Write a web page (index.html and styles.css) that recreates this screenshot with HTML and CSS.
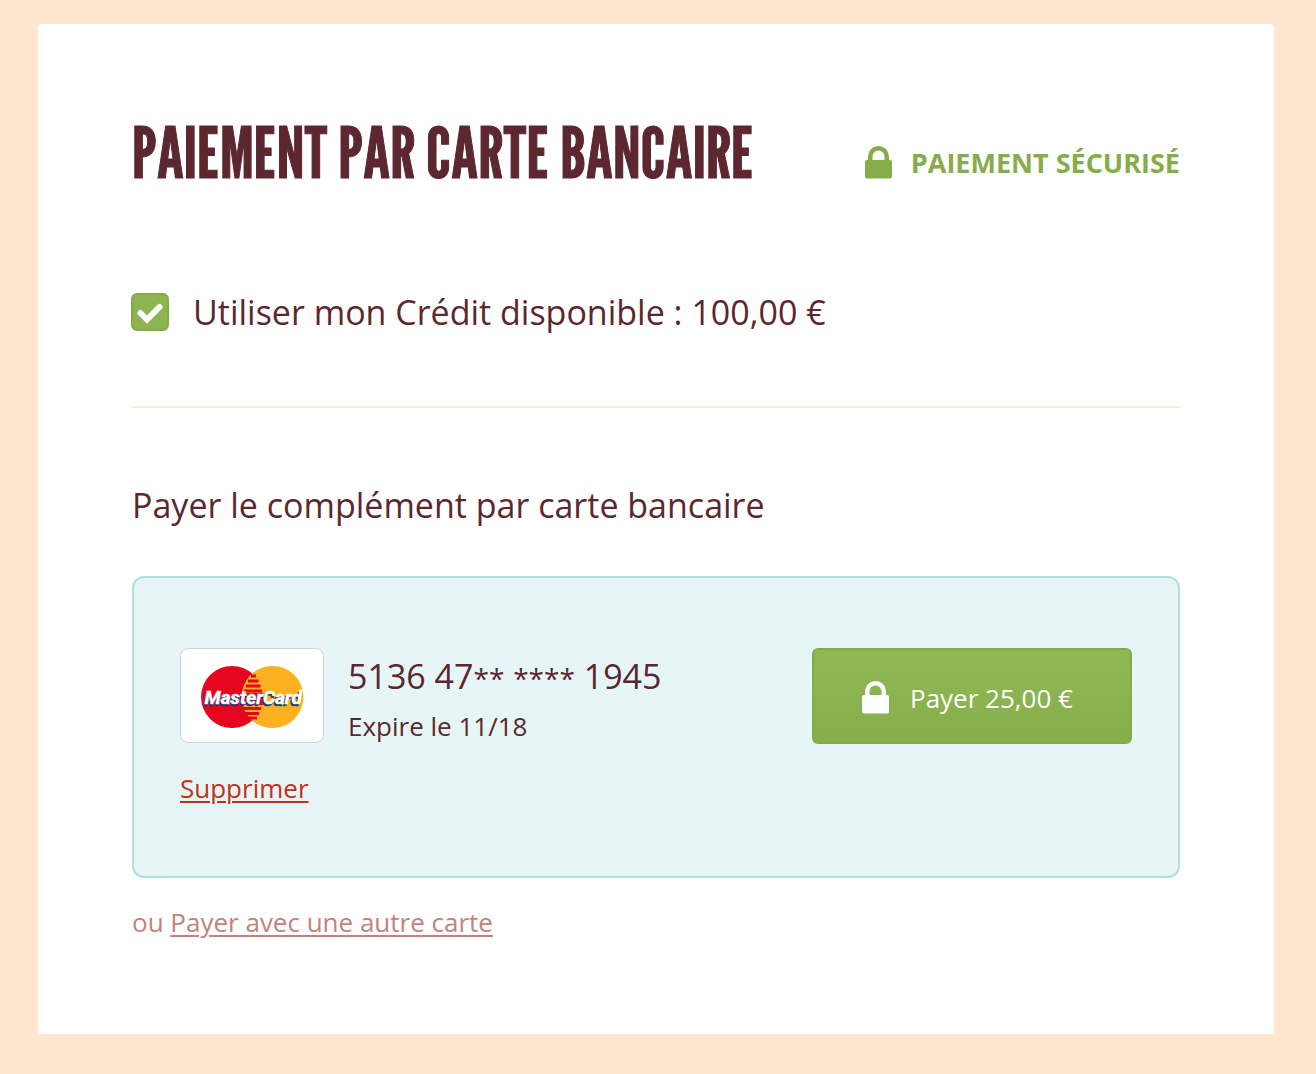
FILE: index.html
```
<!DOCTYPE html>
<html lang="fr">
<head>
<meta charset="utf-8">
<title>Paiement par carte bancaire</title>
<link rel="stylesheet" href="styles.css">
</head>
<body>
<form class="payment" action="" method="post">
  <div class="header">
    <h1>PAIEMENT PAR CARTE BANCAIRE</h1>
    <p class="secure">
      <svg class="lock" viewBox="0 0 28 34" aria-hidden="true">
        <path fill-rule="evenodd" d="M3 14V10.500a10.500 10.500 0 0 1 21 0v3.500h1a2 2 0 0 1 2 2V30.500a2 2 0 0 1-2 2H2a2 2 0 0 1-2-2V16a2 2 0 0 1 2-2ZM7.500 14H19.500V10.500a6 6 0 0 0-12 0Z"/>
      </svg>
      PAIEMENT SÉCURISÉ
    </p>
  </div>

  <div class="credit">
    <input type="checkbox" id="credit" name="credit" checked>
    <label for="credit">Utiliser mon Crédit disponible : 100,00 €</label>
    <svg class="tick" viewBox="0 0 38 38" aria-hidden="true">
      <path d="M9.500 20l6.500 6.500L28.500 14"/>
    </svg>
  </div>

  <h2>Payer le complément par carte bancaire</h2>

  <div class="card">
    <div class="card-row">
      <svg class="logo" viewBox="0 0 144 95" role="img" aria-label="MasterCard">
        <rect x="0.500" y="0.500" width="143" height="94" rx="7.500" fill="#fff" stroke="#cfd4d4"/>
        <circle cx="52" cy="49" r="31" fill="#e6041f"/>
        <circle cx="92.500" cy="49" r="31" fill="#fcb120"/>
        <path d="M71 28h5M68 33h10.500M66 38h14.500M64 43h18M63 60.500h18M65 65.500h14M68 70h9" stroke="#e6041f" stroke-width="3"/>
        <path d="M61.500 45h22v12h-22z" fill="#e6041f"/>
        <g class="logo-text">
          <text x="23" y="57.500" fill="#213a70" stroke="#213a70">MasterCard</text>
          <text x="24.500" y="56" fill="#fff" stroke="#fff">MasterCard</text>
        </g>
      </svg>
      <div class="details">
        <p class="number">5136 47<span class="mask">**</span> <span class="mask">****</span> 1945</p>
        <p class="expiry">Expire le 11/18</p>
      </div>
      <button type="submit" class="pay">
        <svg class="lock" viewBox="0 0 28 34" aria-hidden="true">
          <path fill-rule="evenodd" d="M3 14V10.500a10.500 10.500 0 0 1 21 0v3.500h1a2 2 0 0 1 2 2V30.500a2 2 0 0 1-2 2H2a2 2 0 0 1-2-2V16a2 2 0 0 1 2-2ZM7.500 14H19.500V10.500a6 6 0 0 0-12 0Z"/>
        </svg>
        Payer 25,00 €
      </button>
    </div>
    <a class="remove" href="#">Supprimer</a>
  </div>

  <p class="other">ou <a href="#">Payer avec une autre carte</a></p>
</form>
</body>
</html>
```
FILE: styles.css
```
* { box-sizing: border-box; }
body {
  margin: 24px 42px 40px 38px;
  background: #ffe6d0;
  color: #5c272e;
  font-family: "Segoe UI", "Open Sans", "Noto Sans", sans-serif;
  font-size: 26px;
  line-height: 40px;
}
h1, h2, p { margin: 0; }
.payment {
  padding: 92px 94px;
  background: #fff;
  border-radius: 4px;
  box-shadow: 0 0 2px #fddcc3;
}
.header {
  display: flex;
  justify-content: space-between;
  align-items: center;
}
h1 {
  font-family: "League Gothic", "Liberation Sans Narrow", "Liberation Sans", sans-serif;
  font-size: 70px;
  font-weight: normal;
  line-height: 72px;
  white-space: nowrap;
  -webkit-text-stroke: 1px;
}
.secure {
  display: flex;
  align-items: center;
  gap: 18px;
  padding-top: 22px;
  color: #86ad4a;
  font-size: 27px;
  font-weight: bold;
  white-space: nowrap;
}
.lock {
  flex: none;
  width: 28px;
  height: 34px;
  fill: currentColor;
}
.credit {
  position: relative;
  display: flex;
  align-items: center;
  gap: 24px;
  margin-top: 100px;
  padding-bottom: 70px;
  border-bottom: 2px solid #f8ebd7;
  font-size: 34px;
  line-height: 48px;
}
.credit input {
  appearance: none;
  flex: none;
  width: 38px;
  height: 38px;
  margin: 0 0 0 -1px;
  border: 2px solid #83ac48;
  border-radius: 6px;
  background: #8cb551;
}
.tick {
  position: absolute;
  top: 5px;
  left: -1px;
  width: 38px;
  height: 38px;
  fill: none;
  stroke: #fff;
  stroke-width: 6;
  stroke-linecap: round;
  pointer-events: none;
  visibility: hidden;
}
.credit input:checked ~ .tick { visibility: visible; }
h2 {
  margin: 72px 0 46px;
  font-size: 34px;
  font-weight: normal;
  line-height: 50px;
}
.card {
  padding: 70px 46px 68px;
  border: 2px solid #aee0df;
  border-radius: 12px;
  background: #e6f6f6;
}
.card-row {
  display: flex;
  align-items: flex-start;
  margin-bottom: 20px;
}
.logo {
  flex: none;
  width: 144px;
  height: 95px;
}
.logo-text {
  font: italic bold 19px Roboto, "Open Sans", sans-serif;
  stroke-width: 0.5;
}
.details {
  flex: 1;
  margin-left: 24px;
}
.number {
  font-size: 34px;
  line-height: 56px;
}
.mask {
  font-size: 28px;
  line-height: 28px;
}
.expiry { line-height: 44px; }
.pay {
  display: flex;
  align-items: center;
  gap: 20px;
  width: 320px;
  height: 96px;
  padding: 4px 48px 0;
  border: 2px solid #83ac48;
  border-radius: 6px;
  background: linear-gradient(#90b857, #86af49);
  color: #fff;
  font: inherit;
  cursor: pointer;
}
.remove { color: #c4311a; }
a {
  text-decoration-thickness: 2px;
  text-underline-offset: 3px;
}
.other {
  margin-top: 24px;
  color: #c3827d;
}
.other a { color: inherit; }
```
